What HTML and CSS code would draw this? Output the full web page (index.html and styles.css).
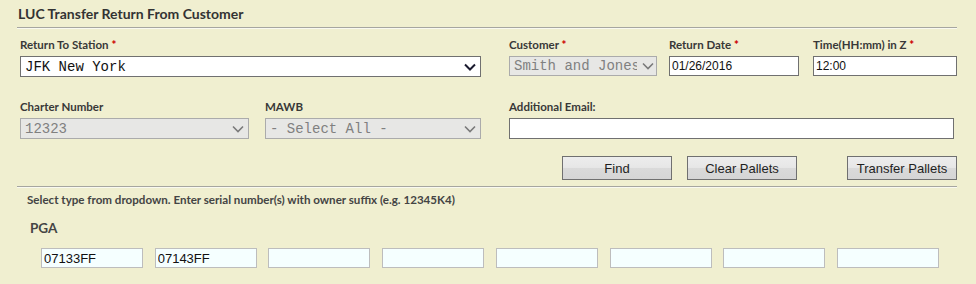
FILE: index.html
```html
<!doctype html>
<html>
  <head>
    <meta charset="utf-8">
    <title>LUC Transfer Return From Customer</title>
    <link rel="stylesheet" href="styles.css">
  </head>
  <body>
    <div class="page">
      <h1 class="title">LUC Transfer Return From Customer</h1>
      <div class="rule"></div>

      <div class="row row-top">
        <div class="field f-station">
          <label>Return To Station <b class="req">*</b></label>
          <span class="pick">
            <select class="sel"><option>JFK New York</option></select>
            <svg class="chev" width="12" height="8" viewBox="0 0 12 8"><path d="M1 1.5l5 5 5-5" fill="none" stroke="#1a1a2e" stroke-width="2"/></svg>
          </span>
        </div>
        <div class="field f-customer">
          <label>Customer <b class="req">*</b></label>
          <span class="pick off">
            <select class="sel" disabled><option>Smith and Jones</option></select>
            <svg class="chev" width="12" height="8" viewBox="0 0 12 8"><path d="M1 1.5l5 5 5-5" fill="none" stroke="#7a7a7a" stroke-width="1.6"/></svg>
          </span>
        </div>
        <div class="field f-date">
          <label>Return Date <b class="req">*</b></label>
          <input class="txt small" type="text" value="01/26/2016">
        </div>
        <div class="field f-time">
          <label>Time(HH:mm) in Z <b class="req">*</b></label>
          <input class="txt small" type="text" value="12:00">
        </div>
      </div>

      <div class="row row-mid">
        <div class="field f-charter">
          <label>Charter Number</label>
          <span class="pick off">
            <select class="sel" disabled><option>12323</option></select>
            <svg class="chev" width="12" height="8" viewBox="0 0 12 8"><path d="M1 1.5l5 5 5-5" fill="none" stroke="#7a7a7a" stroke-width="1.6"/></svg>
          </span>
        </div>
        <div class="field f-mawb">
          <label>MAWB</label>
          <span class="pick off">
            <select class="sel" disabled><option>- Select All -</option></select>
            <svg class="chev" width="12" height="8" viewBox="0 0 12 8"><path d="M1 1.5l5 5 5-5" fill="none" stroke="#7a7a7a" stroke-width="1.6"/></svg>
          </span>
        </div>
        <div class="field f-email">
          <label>Additional Email:</label>
          <input class="txt" type="text" value="">
        </div>
      </div>

      <div class="actions">
        <button class="btn b-find">Find</button>
        <button class="btn b-clear">Clear Pallets</button>
        <button class="btn">Transfer Pallets</button>
      </div>
      <div class="rule"></div>

      <p class="hint">Select type from dropdown. Enter serial number(s) with owner suffix (e.g. 12345K4)</p>
      <h2 class="type">PGA</h2>
      <div class="serials">
        <input class="serial" type="text" value="07133FF">
        <input class="serial" type="text" value="07143FF">
        <input class="serial" type="text" value="">
        <input class="serial" type="text" value="">
        <input class="serial" type="text" value="">
        <input class="serial" type="text" value="">
        <input class="serial" type="text" value="">
        <input class="serial" type="text" value="">
      </div>
    </div>
  </body>
</html>
```

FILE: styles.css
```css
* {
  box-sizing: border-box;
}
html, body {
  margin: 0;
  height: 100%;
  background: #f0efd0;
  font-family: Lato, "Liberation Sans", Arial, sans-serif;
  color: #333;
  overflow: hidden;
}
.page {
  padding: 0 19px 0 17px;
}
.title {
  margin: 0;
  padding: 5px 0 0 1px;
  height: 27px;
  font-size: 14px;
  line-height: 17px;
  font-weight: bold;
  color: #333;
}
.rule {
  border-top: 1px solid #a6a6a0;
  border-bottom: 1px solid #f9f9f0;
}
.row {
  display: flex;
  padding-left: 3px;
}
.row-top {
  margin-top: 8px;
}
.row-mid {
  margin-top: 22px;
}
.field label {
  display: block;
  font-size: 11.5px;
  line-height: 16px;
  font-weight: bold;
  color: #383838;
  margin-bottom: 3px;
  white-space: nowrap;
}
.req {
  color: #c00;
}
.f-station { width: 461px; margin-right: 28px; }
.f-customer { width: 148px; margin-right: 12px; }
.f-date { width: 130px; margin-right: 14px; }
.f-time { width: 144px; }
.f-charter { width: 229px; margin-right: 16px; }
.f-mawb { width: 216px; margin-right: 28px; }
.f-email { width: 445px; }

.pick {
  position: relative;
  display: block;
  height: 21px;
}
.sel {
  -webkit-appearance: none;
  appearance: none;
  display: block;
  width: 100%;
  height: 21px;
  margin: 0;
  padding: 0 20px 0 4px;
  border: 1px solid #707070;
  border-radius: 0;
  background: #fff;
  font-family: "Liberation Mono", "DejaVu Sans Mono", monospace;
  font-size: 14px;
  color: #111;
  outline: none;
}
.chev {
  position: absolute;
  right: 5px;
  top: 7px;
  pointer-events: none;
}
.off .sel {
  background: #e7e7e5;
  border-color: #ababab;
  color: #808080;
  opacity: 1;
}
.f-customer .pick {
  margin-top: 1px;
  height: 20px;
}
.f-customer .sel {
  height: 20px;
  padding-right: 19px;
}
.f-customer .chev {
  top: 6px;
  right: 3px;
}
.txt {
  display: block;
  width: 100%;
  height: 21px;
  margin: 0;
  padding: 0 3px;
  border: 1px solid #707070;
  border-radius: 0;
  background: #fff;
  font-family: "Liberation Sans", Arial, sans-serif;
  font-size: 13px;
  color: #111;
  outline: none;
}
.txt.small {
  height: 20px;
  margin-top: 1px;
  padding: 0 2px;
  font-size: 12px;
}
.actions {
  display: flex;
  justify-content: flex-end;
  margin-top: 17px;
  margin-bottom: 6px;
}
.btn {
  width: 110px;
  height: 24px;
  margin: 0;
  padding: 0;
  border: 1px solid #707070;
  border-radius: 0;
  background: linear-gradient(#ededed, #e6e6e6 50%, #dadada 50%, #d5d5d5);
  font-family: "Liberation Sans", Arial, sans-serif;
  font-size: 13px;
  color: #1f1f1f;
}
.b-find { margin-right: 15px; }
.b-clear { margin-right: 50px; }

.hint {
  margin: 5px 0 0 10px;
  font-size: 11.6px;
  line-height: 14px;
  font-weight: bold;
  color: #444;
}
.type {
  margin: 13px 0 0 13px;
  font-size: 13.5px;
  line-height: 16px;
  font-weight: bold;
  color: #444;
}
.serials {
  display: flex;
  justify-content: space-between;
  width: 898px;
  margin: 12px 0 0 24px;
}
.serial {
  width: 102px;
  height: 20px;
  margin: 0;
  padding: 0 2px;
  border: 1px solid #bdbdbd;
  border-radius: 0;
  background: #f5ffff;
  font-family: "Liberation Sans", Arial, sans-serif;
  font-size: 13px;
  color: #111;
  outline: none;
}
```
